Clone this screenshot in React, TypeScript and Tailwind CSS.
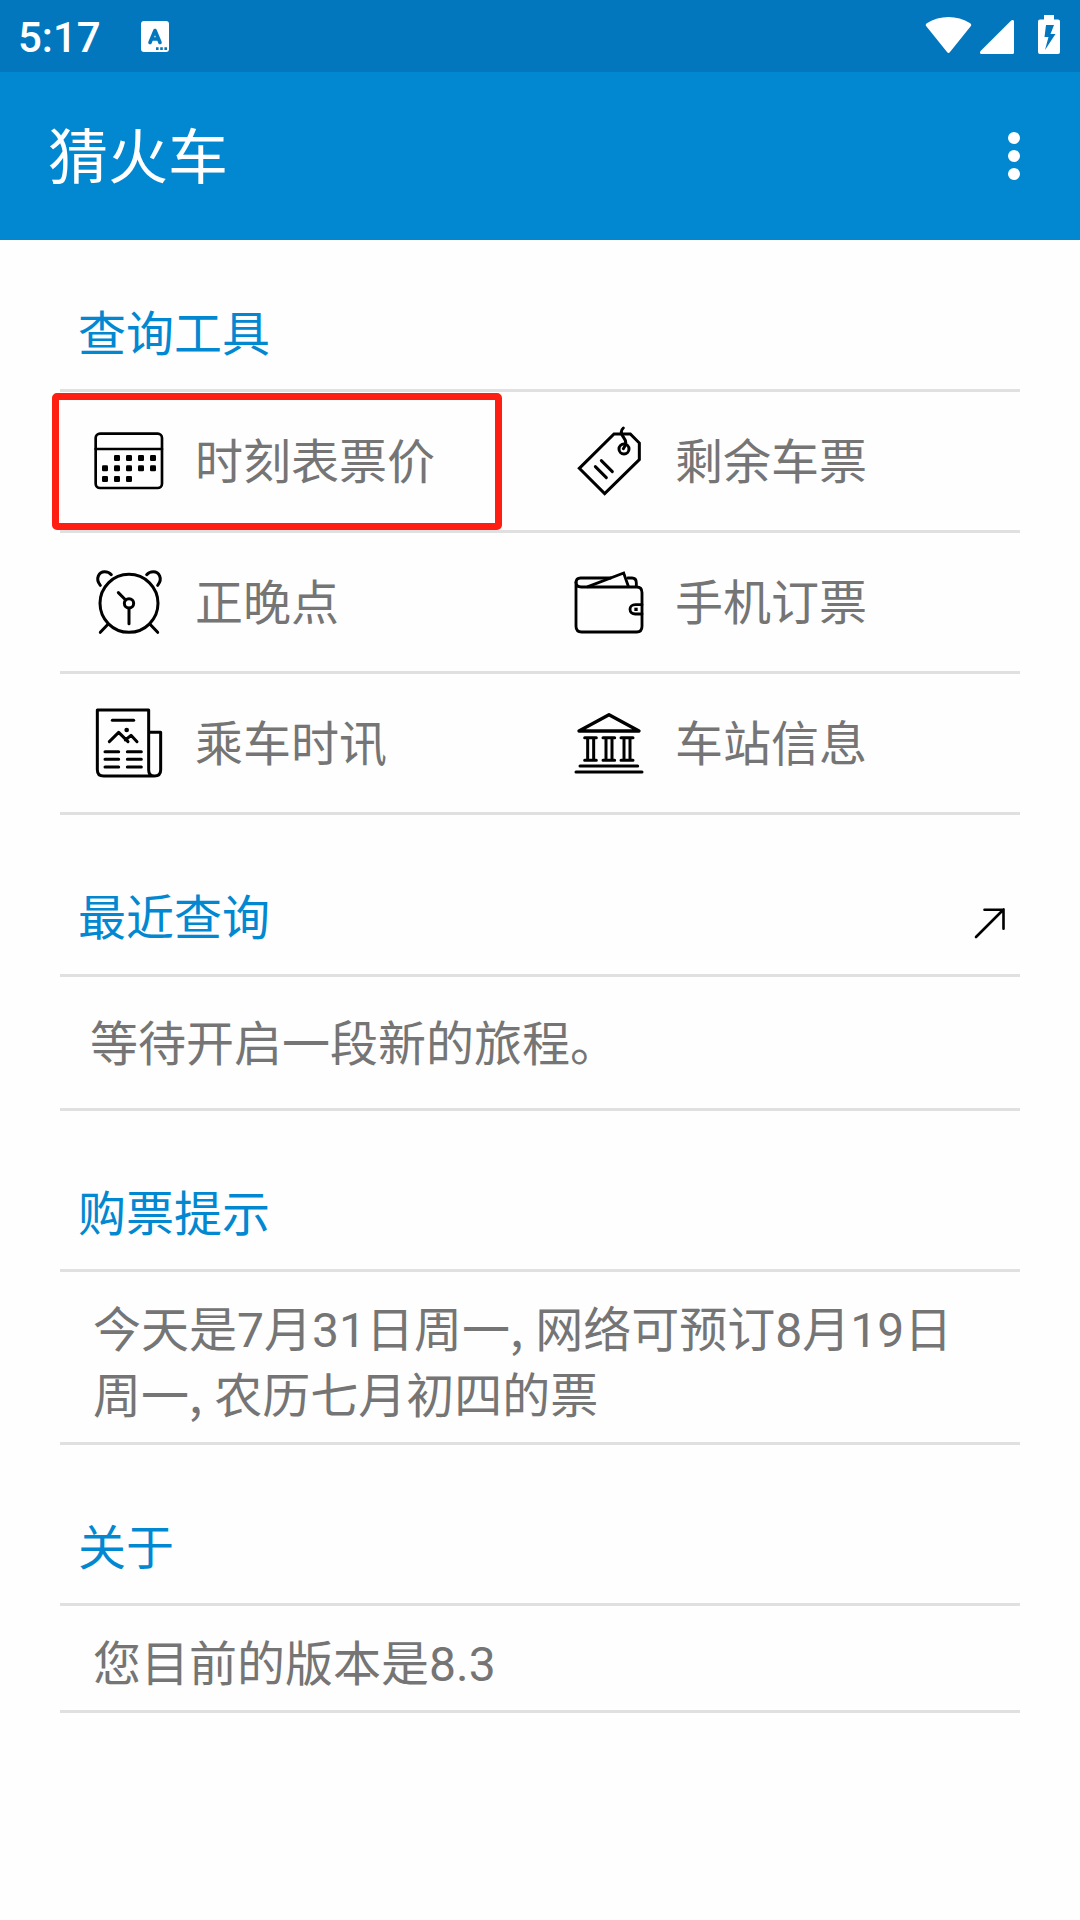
import type { ReactNode } from 'react'

const iconProps = {
  fill: 'none',
  stroke: '#000',
  strokeWidth: 9,
  strokeLinecap: 'round' as const,
  strokeLinejoin: 'round' as const,
  className: 'w-[72px] h-[72px] shrink-0'
}

function CalendarIcon() {
  // [x, y] of every day cell
  const days = [
    [111, 144], [147, 144], [183, 144], [219, 144],
    [75, 175], [111, 175], [147, 175], [183, 175], [219, 175],
    [75, 207], [111, 207], [147, 207]
  ]
  return (
    <svg {...iconProps} strokeWidth="8" viewBox="39 45 216 216">
      <rect x="47" y="71" width="199" height="163" rx="13" />
      <path d="M47 117H246" />
      {days.map(([x, y]) => (
        <rect key={`${x}-${y}`} x={x - 9} y={y - 9} width="18" height="18" rx="4" fill="#000" stroke="none" />
      ))}
    </svg>
  )
}

function TagIcon() {
  return (
    <svg {...iconProps} viewBox="39 45 216 216">
      <path d="M162 72H211L238 99V149L134 251L58 175Z" strokeLinejoin="miter" />
      <circle cx="192" cy="117" r="15" />
      <path d="M190 54C181 62 183 72 190 81C200 94 198 107 190 116" />
      <path d="M124 152L157 185M106 170L139 203" />
    </svg>
  )
}

function ClockIcon() {
  return (
    <svg {...iconProps} viewBox="39 33 216 216">
      <circle cx="147" cy="145" r="87" />
      <circle cx="147" cy="145" r="14" />
      <path d="M137 135L115 113M147 160V206" />
      <path d="M84 208L61 232M210 208L233 232" />
      <path d="M61 91C44 70 58 50 74 50C83 50 89 53 94 59" />
      <path d="M233 91C250 70 236 50 220 50C211 50 205 53 200 59" />
    </svg>
  )
}

function WalletIcon() {
  return (
    <svg {...iconProps} strokeWidth="8.5" viewBox="39 33 216 216">
      <path d="M48 83C48 74 53 69 62 69H152M204 69H216C225 69 229 74 229 84V94" />
      <path d="M48 81V214C48 225 54 231 65 231H230C241 231 246 225 246 214V113C246 102 241 96 230 96H64C53 96 48 91 48 81Z" />
      <path d="M84 95L191 54L205 94" strokeLinejoin="miter" />
      <path d="M246 149H226C216 149 210 155 210 163C210 171 216 177 226 177H246" />
      <rect x="223" y="158" width="10" height="10" fill="#000" stroke="none" />
    </svg>
  )
}

function NewsIcon() {
  return (
    <svg {...iconProps} viewBox="39 36 216 216">
      <path d="M223 243H71C59 243 52 236 52 224V45H206V225C206 236 212 243 223 243C235 243 242 236 242 225V112H207" />
      <path d="M97 76H161" />
      <path d="M88 140L116 112L144 140M136 135L153 121L171 140" />
      <circle cx="140" cy="105" r="7" fill="#000" stroke="none" />
      <path d="M75 170H116M142 170H184M75 193H116M142 193H184M75 216H116M142 216H184" />
    </svg>
  )
}

function StationIcon() {
  return (
    <svg {...iconProps} viewBox="39 36 216 216">
      <path d="M57 108L147 59L237 108Z" strokeWidth="10" />
      <path d="M74 128H109M129 128H164M183 128H219M74 196H109M129 196H164M183 196H219" />
      <path d="M83 128V196M101 128V196M138 128V196M156 128V196M192 128V196M210 128V196" strokeLinecap="butt" />
      <path d="M60 213H233M48 231H246" />
    </svg>
  )
}

const tools = [
  { label: '时刻表票价', icon: <CalendarIcon />, active: true },
  { label: '剩余车票', icon: <TagIcon /> },
  { label: '正晚点', icon: <ClockIcon /> },
  { label: '手机订票', icon: <WalletIcon /> },
  { label: '乘车时讯', icon: <NewsIcon /> },
  { label: '车站信息', icon: <StationIcon /> }
]

function StatusBar() {
  return (
    <div className="h-[72px] bg-[#0277bd] flex items-center justify-between pl-[18px] pr-5">
      <div className="flex items-center gap-10">
        <span className="text-[42px] leading-[72px] font-medium pt-[4px]">5:17</span>
        <svg className="w-7 h-[31px]" viewBox="0 0 28 31">
          <rect width="28" height="31" rx="3" fill="#fff" />
          <path d="M9 21.5L14 9.5L19 21.5M10.5 18H17.5" fill="none" stroke="#0277bd" strokeWidth="3.6" strokeLinecap="round" strokeLinejoin="round" />
          <path d="M15 26.3h2.6v2.6H15zM19.2 26.3h2.6v2.6h-2.6zM23.4 26.3H26v2.6h-2.6z" fill="#0277bd" />
        </svg>
      </div>
      {/* wifi, signal, battery */}
      <svg className="w-[136px] h-[72px]" viewBox="924 0 136 72" fill="#fff">
        <path d="M926.3 26.3C925.4 25.2 925.6 24 926.8 23.2C940 14.8 957 14.8 970.2 23.2C971.4 24 971.6 25.2 970.7 26.3L950 52C949 53.2 948 53.2 947 52Z" />
        <path d="M981.5 54H1012.5Q1014 54 1014 52.5V21.5C1014 19.8 1012.3 19.5 1011.2 20.6L980.6 51C979.5 52.2 979.8 54 981.5 54Z" />
        <path fillRule="evenodd" d="M1044 15H1054V19.5H1058Q1060 19.5 1060 21.5V52Q1060 54 1058 54H1040Q1038 54 1038 52V21.5Q1038 19.5 1040 19.5H1044ZM1046 25L1044.500 37H1048.500L1045 50L1055.500 34H1050.500L1054 25Z" />
      </svg>
    </div>
  )
}

type SectionProps = {
  title: string
  headClass?: string
  action?: ReactNode
  children: ReactNode
}

function Section({ title, headClass = 'h-[161px] pb-[21px]', action, children }: SectionProps) {
  return (
    <section>
      <div className={`flex items-end justify-between border-b-[3px] border-[#e0e0e0] pl-[18px] ${headClass}`}>
        <h2 className="text-[48px] leading-[66px] text-[#0288d1]">{title}</h2>
        {action}
      </div>
      {children}
    </section>
  )
}

// the comma comes from the CJK face, wider than Roboto's
function Comma() {
  return <span className="leading-none font-['Noto_Sans_CJK_SC',sans-serif]">,</span>
}

export default function App() {
  return (
    <div className="w-[1080px] h-[1920px] overflow-hidden bg-[#fefefe] text-[#757575] font-['Roboto','Noto_Sans_CJK_SC',sans-serif]">
      <header className="bg-[#0288d1] text-white">
        <StatusBar />
        <div className="h-[168px] flex items-center justify-between pl-12 pr-[60px]">
          <h1 className="text-[60px] leading-[80px] pt-[5px]">猜火车</h1>
          <div className="flex flex-col gap-[6px]">
            <i className="size-3 rounded-full bg-white" />
            <i className="size-3 rounded-full bg-white" />
            <i className="size-3 rounded-full bg-white" />
          </div>
        </div>
      </header>

      <main className="px-[60px]">
        <Section title="查询工具" headClass="h-[152px] pb-[21px]">
          <div className="grid grid-cols-2">
            {tools.map((tool) => (
              <div key={tool.label} className="relative h-[141px] flex items-center pl-[33px] border-b-[3px] border-[#e0e0e0]">
                {tool.icon}
                <span className="ml-[30px] pt-[4px] text-[48px] leading-[66px]">{tool.label}</span>
                {tool.active && (
                  <div className="absolute -left-2 top-px w-[450px] h-[137px] rounded-[5px] border-[7px] border-[#ff1f12]" />
                )}
              </div>
            ))}
          </div>
        </Section>

        <Section
          title="最近查询"
          headClass="h-[162px] pb-[22px]"
          action={
            <svg className="w-9 h-9 mr-3 mb-[11px]" viewBox="0 0 36 36" fill="none" stroke="#000" strokeWidth="2.6" strokeLinecap="round">
              <path d="M4 32L31.500 4.500M12.500 4.700H31.500V23.700" />
            </svg>
          }
        >
          <p className="h-[134px] border-b-[3px] border-[#e0e0e0] pl-[30px] pt-[35px] text-[48px] leading-[66px]">
            等待开启一段新的旅程。
          </p>
        </Section>

        <Section title="购票提示">
          <p className="h-[173px] border-b-[3px] border-[#e0e0e0] pl-[33px] pt-[26px] text-[48px] leading-[66px]">
            今天是7月31日周一<Comma /> 网络可预订8月19日
            <br />
            周一<Comma /> 农历七月初四的票
          </p>
        </Section>

        <Section title="关于">
          <p className="h-[107px] border-b-[3px] border-[#e0e0e0] pl-[33px] pt-[26px] text-[48px] leading-[66px]">
            您目前的版本是8.3
          </p>
        </Section>
      </main>
    </div>
  )
}
